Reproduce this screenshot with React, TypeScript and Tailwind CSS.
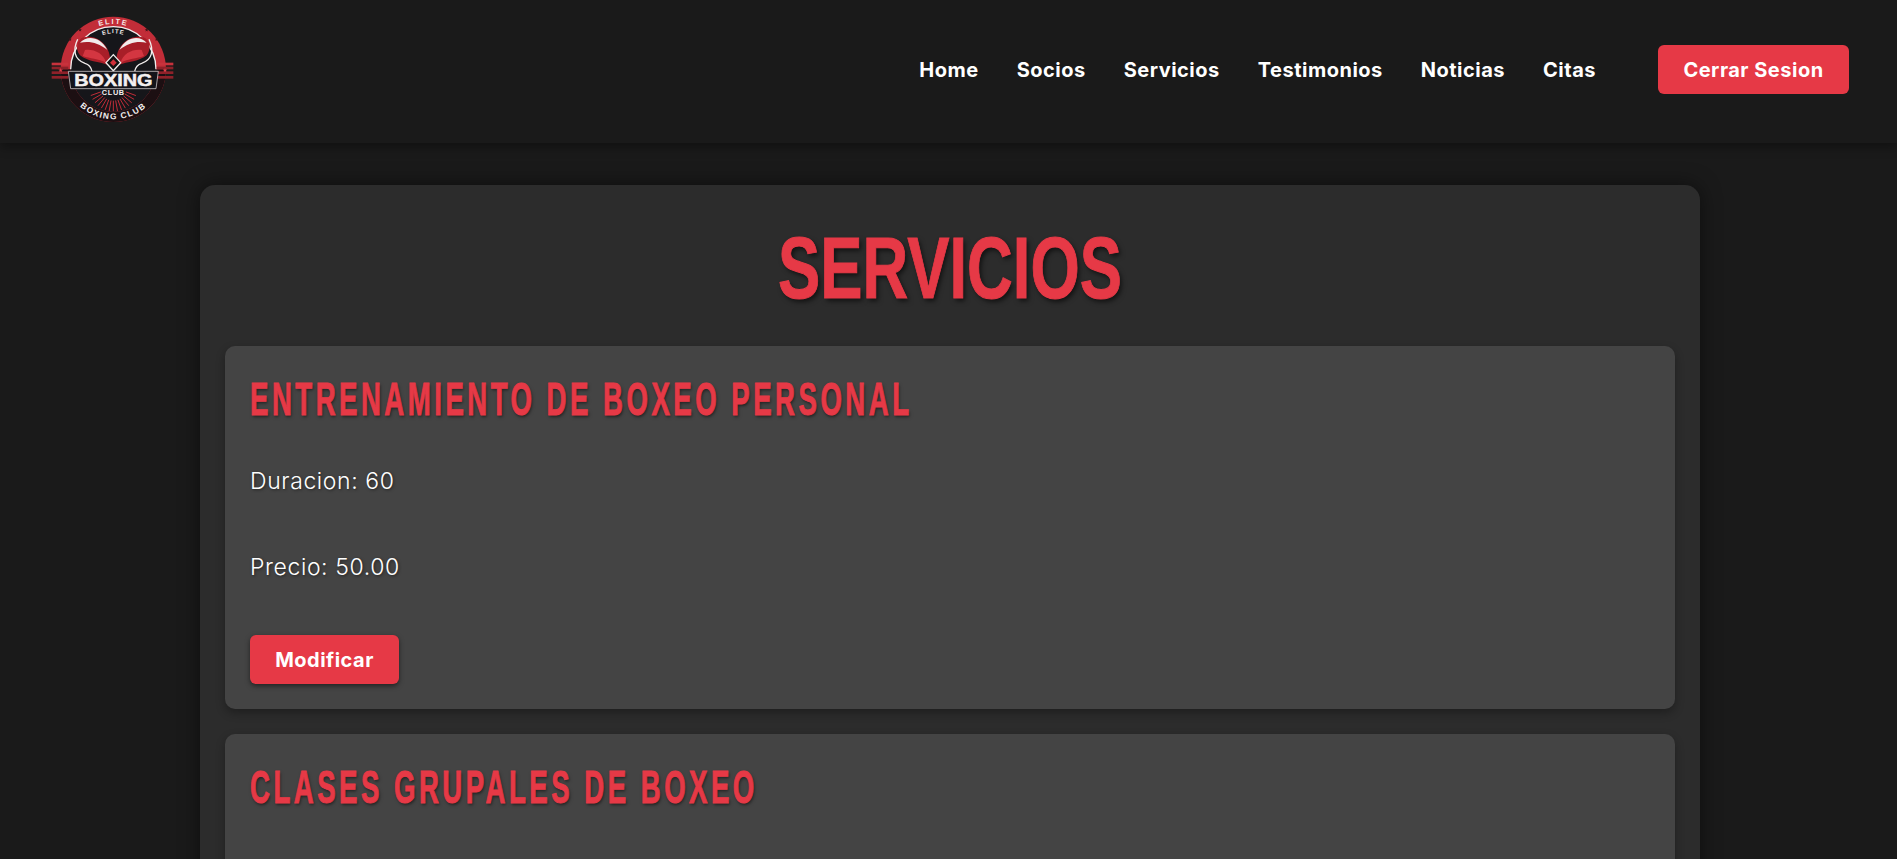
const navLinks = ["Home", "Socios", "Servicios", "Testimonios", "Noticias", "Citas"];

type Servicio = { nombre: string; duracion?: number; precio?: string };

const servicios: Servicio[] = [
  { nombre: "Entrenamiento de Boxeo Personal", duracion: 60, precio: "50.00" },
  { nombre: "Clases Grupales de Boxeo" },
];

function Star({ x, y, r, fill }: { x: number; y: number; r: number; fill: string }) {
  const points = Array.from({ length: 10 }, (_, i) => {
    const radius = i % 2 === 0 ? r : r * 0.42;
    const angle = (Math.PI / 5) * i - Math.PI / 2;
    return `${x + radius * Math.cos(angle)},${y + radius * Math.sin(angle)}`;
  }).join(" ");
  return <polygon points={points} fill={fill} />;
}

function Glove({ flip }: { flip?: boolean }) {
  return (
    <g transform={flip ? "matrix(-1 0 0 1 500 0)" : undefined}>
      <path d="M 240 172 C 236 130 195 102 160 112 C 138 120 136 150 150 166 C 170 184 210 186 232 194 Z" fill="#a81e28" />
      <path d="M 150 128 C 170 106 210 108 232 150 C 205 128 178 122 150 128 Z" fill="#f1ecec" />
      <path d="M 158 168 C 180 176 205 176 228 188 C 222 160 190 146 165 150 Z" fill="#d43641" />
      <path d="M 143 118 C 128 150 132 178 165 190 C 178 194 184 204 186 214" fill="none" stroke="#f1ecec" strokeWidth="4" />
    </g>
  );
}

function Logo() {
  const rays = Array.from({ length: 15 }, (_, i) => 20 + i * 10);
  return (
    <svg viewBox="60 24 381 369" className="w-[127px] h-[123px] shrink-0">
      <defs>
        <path id="arcTop" d="M 135 135 A 136 136 0 0 1 365 135" />
        <path id="arcTopInner" d="M 170 135.5 A 108 108 0 0 1 330 135.5" />
        <path id="arcBottom" d="M 135 304 A 150 150 0 0 0 365 304" />
      </defs>
      <circle cx="250" cy="208" r="158" fill="#c22d38" />
      <path d="M 92 208 A 158 158 0 0 0 408 208 L 378 208 A 128 128 0 0 1 122 208 Z" fill="#1c0f12" />
      <circle cx="250" cy="208" r="128" fill="#16161a" />
      <path d="M 122 208 A 128 128 0 0 1 378 208" fill="none" stroke="#f1ecec" strokeWidth="4" />
      {[0, 1].map((side) => (
        <g key={side} fill="#c8323c">
          <rect x={side ? 380 : 65} y="188" width="50" height="8" />
          <rect x={side ? 380 : 65} y="200" width="50" height="8" fill="#8e2129" />
          <rect x={side ? 380 : 65} y="214" width="50" height="8" fill="#8e2129" />
          <rect x={side ? 380 : 65} y="228" width="50" height="8" fill="#8e2129" />
          <Star x={side ? 405 : 92} y={211} r={7} fill="#e0404a" />
        </g>
      ))}
      <Star x={120} y={118} r={6} fill="#3a1418" />
      <Star x={150} y={90} r={6} fill="#3a1418" />
      <Star x={350} y={90} r={6} fill="#3a1418" />
      <Star x={380} y={118} r={6} fill="#3a1418" />
      {rays.map((deg) => (
        <line
          key={deg}
          x1={250 + 40 * Math.cos((deg * Math.PI) / 180)}
          y1={262 + 40 * Math.sin((deg * Math.PI) / 180)}
          x2={250 + 72 * Math.cos((deg * Math.PI) / 180)}
          y2={262 + 72 * Math.sin((deg * Math.PI) / 180)}
          stroke="#c22d38"
          strokeWidth="3"
        />
      ))}
      <Glove />
      <Glove flip />
      <path d="M 250 164 L 272 188 L 250 212 L 228 188 Z" fill="#111" stroke="#f1ecec" strokeWidth="4" />
      <path d="M 250 178 L 260 188 L 250 198 L 240 188 Z" fill="#d0303a" />
      <path d="M 115 214 L 385 214 L 378 266 L 122 266 Z" fill="#14141a" stroke="#f1ecec" strokeWidth="2" />
      <text x="250" y="258" textAnchor="middle" fill="#f4f0f0" stroke="#f4f0f0" strokeWidth="1.5" textLength="235" lengthAdjust="spacingAndGlyphs" className="font-['Liberation_Sans',sans-serif] font-bold text-[50px]">BOXING</text>
      <text x="250" y="285" textAnchor="middle" fill="#f4f0f0" className="font-['Liberation_Sans',sans-serif] font-bold text-[22px] tracking-[2px]">CLUB</text>
      <text fill="#f6e6e6" className="font-['Liberation_Sans',sans-serif] font-bold text-[22px] tracking-[5px]">
        <textPath href="#arcTop" startOffset="50%" textAnchor="middle">ELITE</textPath>
      </text>
      <text fill="#f1ecec" className="font-['Liberation_Sans',sans-serif] font-bold text-[18px] tracking-[3px]">
        <textPath href="#arcTopInner" startOffset="50%" textAnchor="middle">ELITE</textPath>
      </text>
      <text fill="#f4f0f0" className="font-['Liberation_Sans',sans-serif] font-bold text-[25px] tracking-[4px]">
        <textPath href="#arcBottom" startOffset="50%" textAnchor="middle">BOXING CLUB</textPath>
      </text>
    </svg>
  );
}

function Header() {
  return (
    <header className="h-[143px] bg-[#1a1a1a] flex items-center pl-[50px] pr-[48px] pb-[4px] shadow-[0_4px_10px_rgba(0,0,0,0.35)] relative">
      <Logo />
      <nav className="ml-auto flex items-center gap-[38px] text-white font-bold text-[20px] tracking-[0.5px] font-['Inter',sans-serif]">
        {navLinks.map((link) => (
          <a key={link} href="#">
            {link}
          </a>
        ))}
      </nav>
      <button className="ml-[62px] w-[191px] h-[49px] rounded-md bg-[#e63946] text-white font-bold text-[20px] tracking-[0.5px] font-['Inter',sans-serif]">
        Cerrar Sesion
      </button>
    </header>
  );
}

function ServicioCard({ nombre, duracion, precio }: Servicio) {
  return (
    <article className="bg-[#444444] rounded-[10px] p-[25px] min-h-[200px] shadow-[0_4px_10px_rgba(0,0,0,0.3)]">
      <h2 className="uppercase text-[#e63946] font-bold text-[46px] leading-[56px] font-['Liberation_Sans',sans-serif] tracking-[5.8px] origin-left scale-x-[0.6] whitespace-nowrap [-webkit-text-stroke:1px_#e63946] [text-shadow:2px_2px_4px_rgba(0,0,0,0.5)]">
        {nombre}
      </h2>
      {duracion !== undefined && (
        <>
          <p className="mt-[38px] text-white text-[23px] tracking-[0.6px] leading-[32px] font-light font-['Inter',sans-serif] [text-shadow:1px_1px_3px_rgba(0,0,0,0.5)]">
            Duracion: {duracion}
          </p>
          <p className="mt-[54px] text-white text-[23px] tracking-[0.6px] leading-[32px] font-light font-['Inter',sans-serif] [text-shadow:1px_1px_3px_rgba(0,0,0,0.5)]">
            Precio: {precio}
          </p>
          <button className="block mt-[52px] w-[149px] h-[49px] rounded-md bg-[#e63946] text-white font-bold text-[20px] tracking-[0.5px] font-['Inter',sans-serif] shadow-[0_2px_5px_rgba(0,0,0,0.5)]">
            Modificar
          </button>
        </>
      )}
    </article>
  );
}

export default function App() {
  return (
    <div className="h-[859px] overflow-hidden bg-[#1a1a1a]">
      <Header />
      <main className="w-[1500px] ml-[200px] mt-[42px] bg-[#2c2c2c] rounded-[15px] px-[25px] pt-[27px] pb-[25px] shadow-[0_0_20px_rgba(0,0,0,0.5)]">
        <h1 className="text-center uppercase text-[#e63946] font-bold text-[88px] leading-[112px] font-['Liberation_Sans',sans-serif] scale-x-[0.72] [-webkit-text-stroke:1px_#e63946] [text-shadow:3px_3px_6px_rgba(0,0,0,0.6)]">
          Servicios
        </h1>
        <div className="mt-[22px] flex flex-col gap-[25px]">
          {servicios.map((servicio) => (
            <ServicioCard key={servicio.nombre} {...servicio} />
          ))}
        </div>
      </main>
    </div>
  );
}
